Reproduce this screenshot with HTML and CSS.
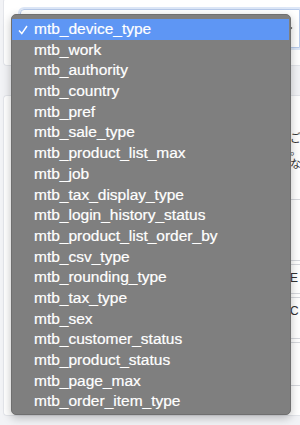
FILE: index.html
```html
<!DOCTYPE html>
<html lang="ja">
<head>
    <title>マスタデータ管理</title>
    <meta http-equiv="Content-Type" content="text/html; charset=UTF-8"/>
    <link rel="stylesheet" href="styles.css">
</head>
<body>
<div class="page">
    <div class="card card-top">
        <div class="select">
            <svg class="select-arrow" width="8" height="6" viewBox="0 0 8 6"><polyline points="1,1.5 4,4.5 7,1.5" fill="none" stroke="#555" stroke-width="1.2"/></svg>
        </div>
    </div>
    <div class="card card-main">
        <div class="side">
            <p class="side-text">ご<br>。<br>な</p>
            <div class="rule rule-a"></div>
            <div class="rule rule-b"></div>
            <div class="rule"></div>
            <p class="side-word">E</p>
            <div class="rule rule-c"></div>
            <div class="rule"></div>
            <p class="side-word">C</p>
            <div class="rule rule-d"></div>
            <div class="rule"></div>
            <div class="rule rule-e"></div>
        </div>
    </div>
</div>

<div class="menu">
    <div class="menu-item selected">
        <svg class="check" width="10" height="10" viewBox="0 0 10 10"><polyline points="1,5.5 3.8,8.6 9,1" fill="none" stroke="#fff" stroke-width="1.5"/></svg>
        mtb_device_type
    </div>
    <div class="menu-item">mtb_work</div>
    <div class="menu-item">mtb_authority</div>
    <div class="menu-item">mtb_country</div>
    <div class="menu-item">mtb_pref</div>
    <div class="menu-item">mtb_sale_type</div>
    <div class="menu-item">mtb_product_list_max</div>
    <div class="menu-item">mtb_job</div>
    <div class="menu-item">mtb_tax_display_type</div>
    <div class="menu-item">mtb_login_history_status</div>
    <div class="menu-item">mtb_product_list_order_by</div>
    <div class="menu-item">mtb_csv_type</div>
    <div class="menu-item">mtb_rounding_type</div>
    <div class="menu-item">mtb_tax_type</div>
    <div class="menu-item">mtb_sex</div>
    <div class="menu-item">mtb_customer_status</div>
    <div class="menu-item">mtb_product_status</div>
    <div class="menu-item">mtb_page_max</div>
    <div class="menu-item">mtb_order_item_type</div>
</div>
</body>
</html>
```

FILE: styles.css
```css
body {
    margin: 0;
    padding: 0;
    background-color: #f2f3f6;
    font-family: "Liberation Sans", Arial, "Noto Sans CJK JP", sans-serif;
    width: 300px;
    height: 425px;
    overflow: hidden;
    position: relative;
}
.page {
    display: flex;
    flex-direction: column;
    padding-left: 3px;
}
.card {
    background-color: #ffffff;
    border: 1px solid #e3e5ea;
    border-right: none;
    border-radius: 4px 0 0 4px;
    box-sizing: border-box;
}
.card-top {
    height: 68px;
    margin-top: -2px;
    padding: 10px 0 0 16px;
}
.select {
    display: flex;
    align-items: center;
    justify-content: flex-end;
    height: 39px;
    box-sizing: border-box;
    border: 1px solid #b8cbeb;
    border-radius: 4px 0 0 4px;
    box-shadow: 0 0 0 2px #dde7f7;
    padding: 0 6px 0 12px;
}
.select-arrow {
    margin-top: 1px;
}
.card-main {
    height: 321px;
    margin-top: 29px;
}
.side {
    display: flex;
    flex-direction: column;
    padding: 36px 0 0 286px;
    color: #333;
}
.side-text {
    margin: 0;
    font-size: 11px;
    line-height: 13px;
    white-space: nowrap;
}
.side-word {
    margin: 6px 0 0;
    font-size: 12px;
    line-height: 14px;
    white-space: nowrap;
}
.rule {
    height: 1px;
    background-color: #d6d8dd;
    margin-top: 3px;
}
.rule-a {
    margin-top: 28px;
}
.rule-b {
    margin-top: 60px;
}
.rule-c {
    margin-top: 8px;
}
.rule-d {
    margin-top: 20px;
}
.rule-e {
    margin-top: 42px;
}
.menu {
    position: absolute;
    left: 11px;
    top: 14px;
    width: 280px;
    height: 401px;
    box-sizing: border-box;
    padding: 4px 0;
    background-color: #7f7f7f;
    border: 1px solid #6f6f6f;
    border-radius: 5px;
    box-shadow: 0 3px 10px rgba(0, 0, 0, 0.25);
}
.menu-item {
    position: relative;
    height: 20.7px;
    line-height: 20.7px;
    padding-left: 22px;
    font-size: 15.5px;
    color: #ffffff;
    -webkit-text-stroke: 0.2px #ffffff;
    white-space: nowrap;
}
.menu-item.selected {
    background-color: #5e96f4;
    margin-right: 1px;
}
.check {
    position: absolute;
    left: 6px;
    top: 6px;
}
```
